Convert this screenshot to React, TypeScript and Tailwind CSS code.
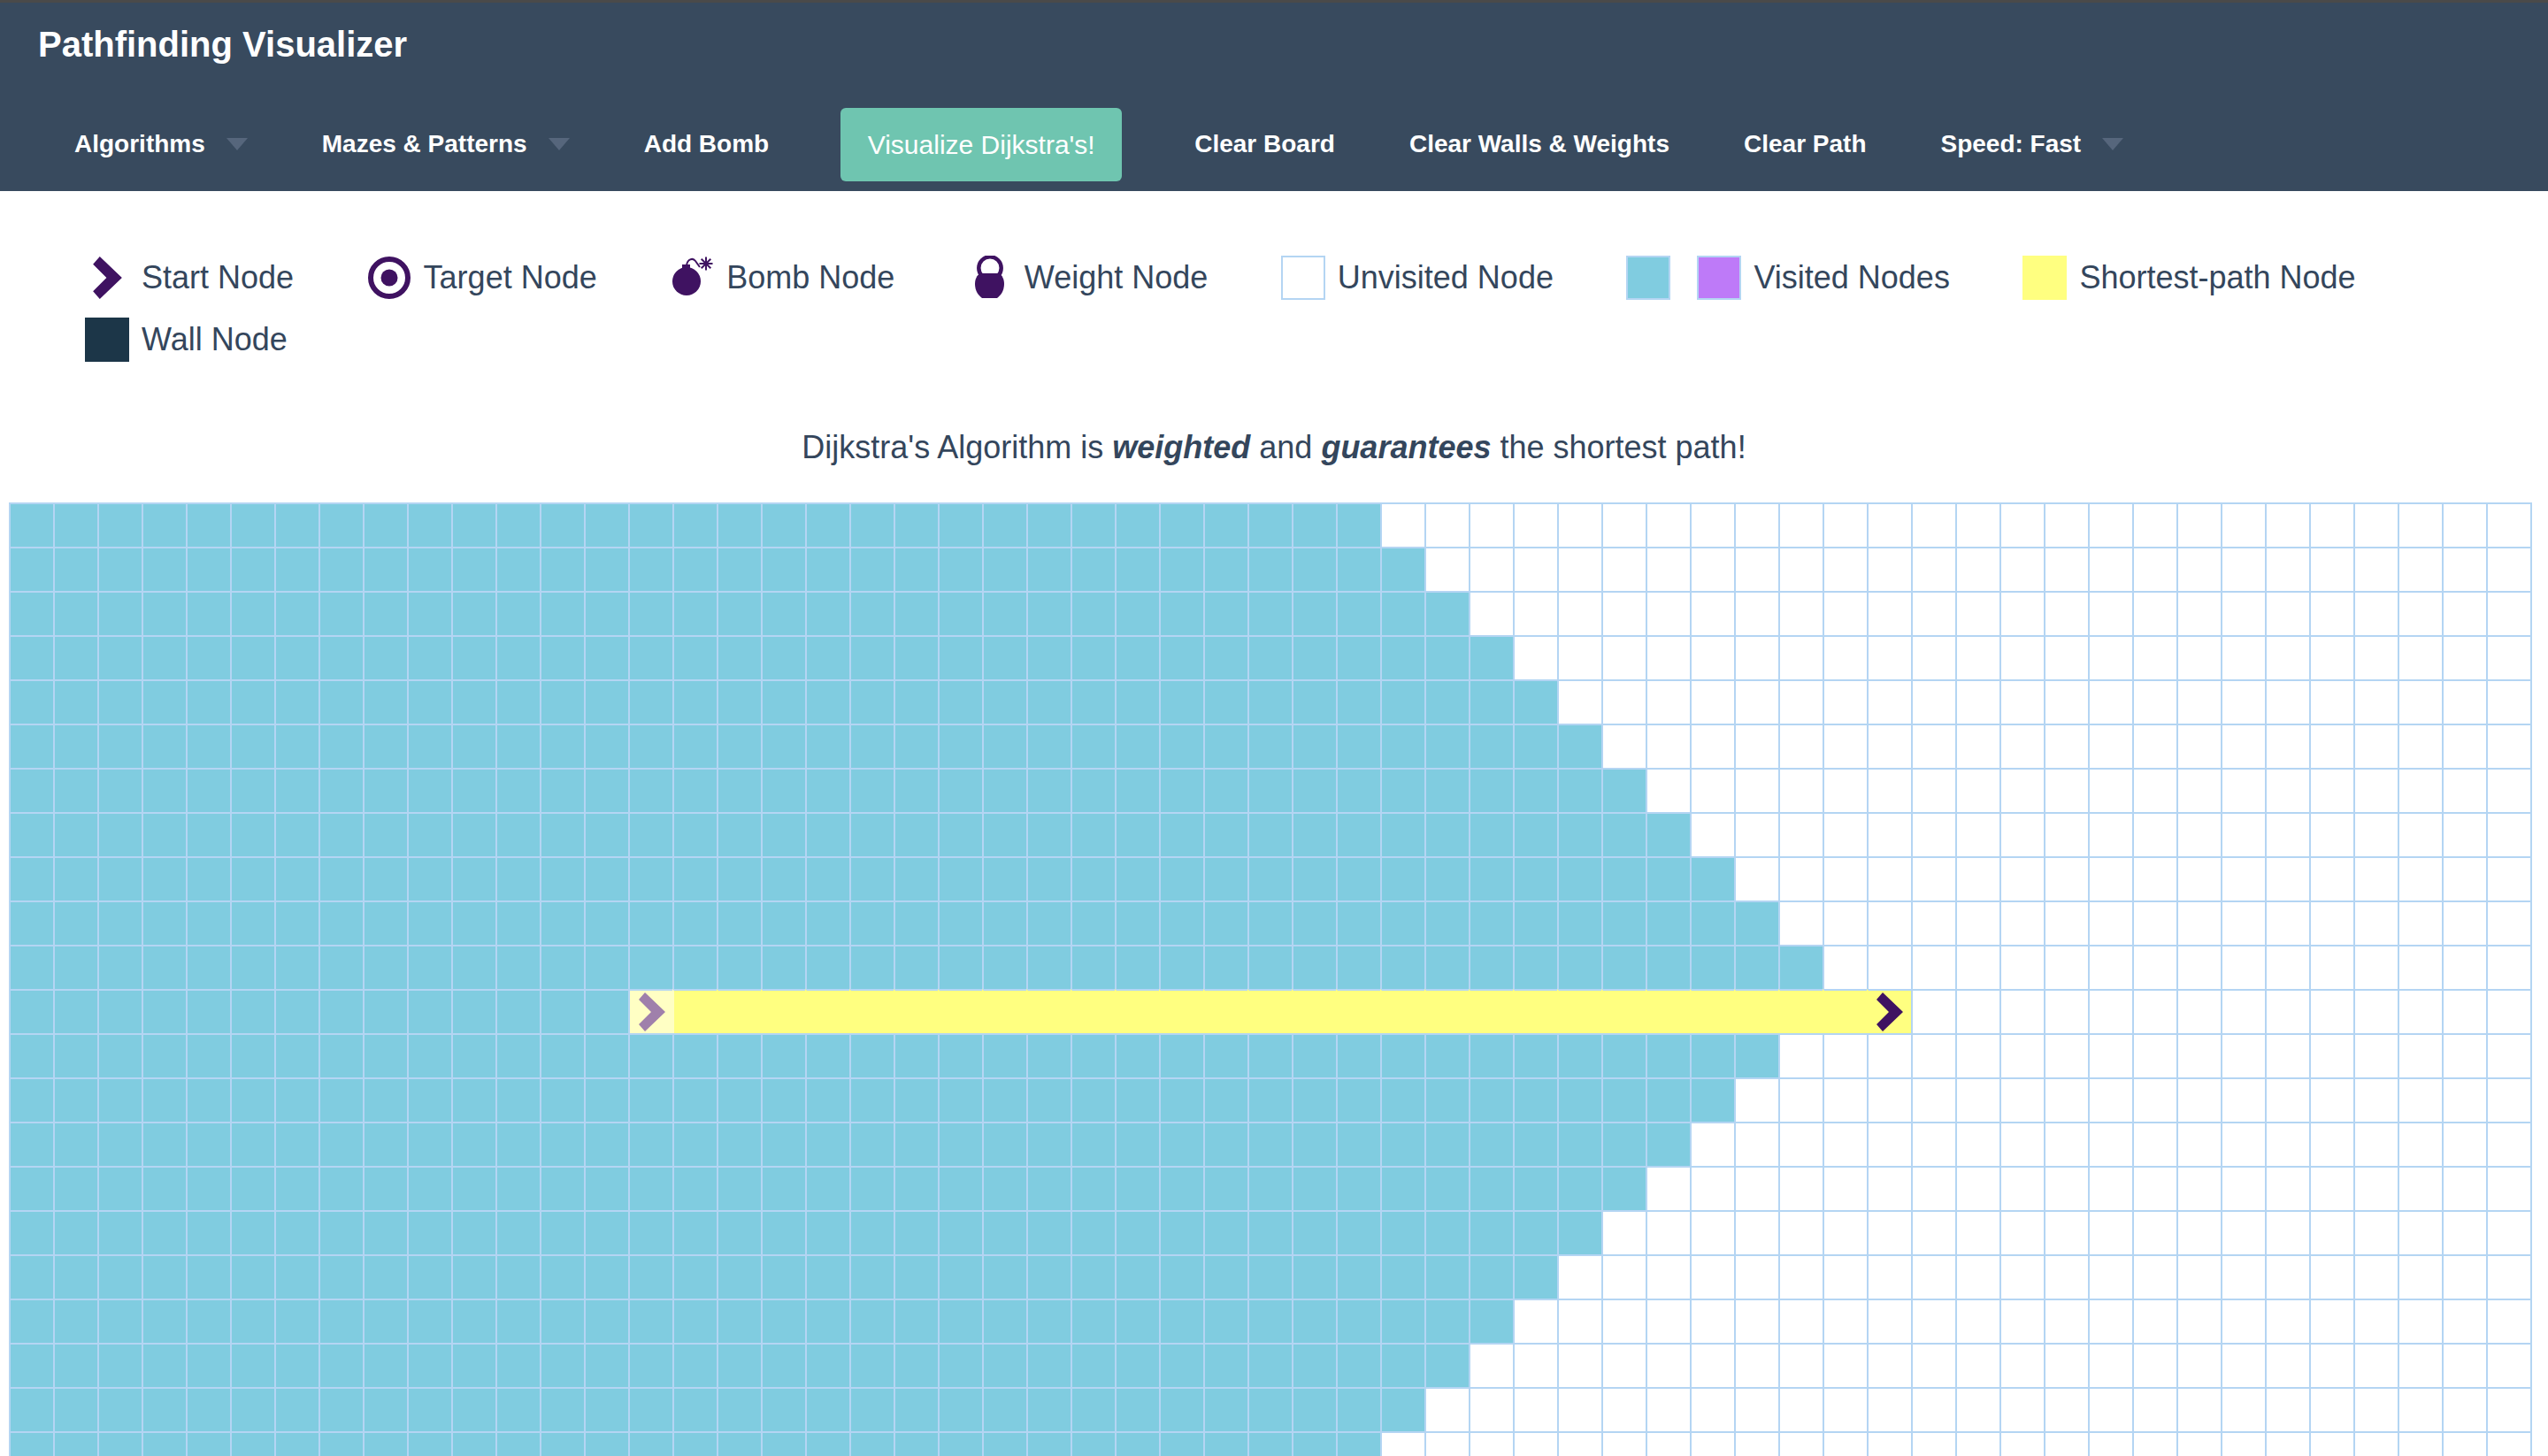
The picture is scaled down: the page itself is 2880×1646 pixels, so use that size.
const visitedCounts = [31, 32, 33, 34, 35, 36, 37, 38, 39, 40, 41, 14, 40, 39, 38, 37, 36, 35, 34, 33, 32, 31];

const StartIcon = ({ className, fill = "#3f1261" }: { className?: string; fill?: string }) => (
  <svg viewBox="0 0 30 44" className={className}>
    <path d="M7 0 L30 22 L7 44 L0 36 L14 22 L0 8 Z" fill={fill} />
  </svg>
);

const TargetIcon = () => (
  <svg viewBox="0 0 50 50" className="h-[50px] w-[50px]">
    <circle cx="25" cy="25" r="21" fill="none" stroke="#3f1261" strokeWidth="6" />
    <circle cx="25" cy="25" r="9.5" fill="#3f1261" />
  </svg>
);

const BombIcon = () => (
  <svg viewBox="0 0 50 50" className="h-[50px] w-[50px]">
    <circle cx="19" cy="29" r="16" fill="#3f1261" />
    <rect x="14" y="10" width="9" height="5" fill="#3f1261" />
    <path d="M19 11 C20 4 26 2 29 6 L34 13" fill="none" stroke="#3f1261" strokeWidth="2" />
    <path d="M41 1.5 V16.5 M33.5 9 H48.5 M35.7 3.7 L46.3 14.3 M46.3 3.7 L35.7 14.3" stroke="#3f1261" strokeWidth="2" />
  </svg>
);

const WeightIcon = () => (
  <svg viewBox="0 0 50 50" className="h-[50px] w-[50px]">
    <circle cx="25" cy="14" r="12.7" fill="none" stroke="#3f1261" strokeWidth="4.5" />
    <path d="M14 20 H35 C39 22 41 27 41 32 C41 40 37 45 33 48 H16 C12 45 8 40 8 32 C8 27 10 22 14 20 Z" fill="#3f1261" />
  </svg>
);

const Swatch = ({ className }: { className: string }) => <div className={`h-[50px] w-[50px] ${className}`} />;

const LegendItem = ({ icon, label }: { icon: React.ReactNode; label: string }) => (
  <li className="mr-[82.5px] flex h-[70px] items-center">
    <div className="mr-[14px] flex w-[50px] justify-center">{icon}</div>
    <span>{label}</span>
  </li>
);

const NavItem = ({ label, caret }: { label: string; caret?: boolean }) => (
  <a className="flex items-center text-[28px] font-bold text-white">
    {label}
    {caret && <span className="ml-[24px] h-0 w-0 border-x-[12px] border-t-[14px] border-x-transparent border-t-[#56667c]" />}
  </a>
);

const Cell = ({ row, col }: { row: number; col: number }) => {
  const isPath = row === 11 && col >= 14 && col <= 42;
  if (isPath) {
    return (
      <div
        className={`flex h-[50px] w-[50px] items-center justify-center border-t-2 border-l-2 border-t-[#b4d5f3] ${
          col === 14 ? "border-l-[#b4d5f3] bg-[#ffffc4]" : col === 15 ? "border-l-[#ffffc4] bg-[#ffff80]" : "border-l-[#ffff80] bg-[#ffff80]"
        }`}
      >
        {col === 14 && <StartIcon className="ml-[2px] h-[44px] w-[30px]" fill="#9f80ab" />}
        {col === 42 && <StartIcon className="h-[44px] w-[30px]" />}
      </div>
    );
  }
  const visited = col < visitedCounts[row];
  return <div className={`h-[50px] w-[50px] border-t-2 border-l-2 border-[#b4d5f3] ${visited ? "bg-[#80cce0]" : "bg-white"}`} />;
};

export default function App() {
  return (
    <div className="h-[1646px] overflow-hidden bg-white font-['Liberation_Sans',Arial,sans-serif] text-[#34465c]">
      <nav className="h-[216px] border-t-[3px] border-[#4a4a4a] bg-[#384a5e]">
        <h1 className="pt-[24px] pl-[43px] text-[40px] leading-[46px] font-bold text-white">Pathfinding Visualizer</h1>
        <div className="mt-[48px] flex h-[84px] items-center pl-[84px]">
          <NavItem label="Algorithms" caret />
          <div className="ml-[84px]"><NavItem label="Mazes & Patterns" caret /></div>
          <div className="ml-[84px]"><NavItem label="Add Bomb" /></div>
          <button className="ml-[81px] h-[83px] w-[318px] rounded-[6px] bg-[#6fc5b0] text-[30px] text-white">Visualize Dijkstra's!</button>
          <div className="ml-[82px]"><NavItem label="Clear Board" /></div>
          <div className="ml-[84px]"><NavItem label="Clear Walls & Weights" /></div>
          <div className="ml-[84px]"><NavItem label="Clear Path" /></div>
          <div className="ml-[84px]"><NavItem label="Speed: Fast" caret /></div>
        </div>
      </nav>

      <ul className="flex flex-wrap pt-[63px] pl-[96px] text-[36px]">
        <LegendItem icon={<StartIcon className="h-[48px] w-[33px]" />} label="Start Node" />
        <LegendItem icon={<TargetIcon />} label="Target Node" />
        <LegendItem icon={<BombIcon />} label="Bomb Node" />
        <LegendItem icon={<WeightIcon />} label="Weight Node" />
        <LegendItem icon={<Swatch className="border-2 border-[#b4d5f3]" />} label="Unvisited Node" />
        <li className="mr-[82.5px] flex h-[70px] items-center">
          <Swatch className="mr-[30px] border-2 border-[#b4d5f3] bg-[#80cce0]" />
          <Swatch className="mr-[14px] border-2 border-[#b4d5f3] bg-[#be7af8]" />
          <span>Visited Nodes</span>
        </li>
        <LegendItem icon={<Swatch className="bg-[#ffff80]" />} label="Shortest-path Node" />
        <LegendItem icon={<Swatch className="bg-[#1c3648]" />} label="Wall Node" />
      </ul>

      <p className="mt-[66px] text-center text-[36px] leading-[42px]">
        Dijkstra's Algorithm is <b><i>weighted</i></b> and <b><i>guarantees</i></b> the shortest path!
      </p>

      <div className="mt-[41px] ml-[10px] grid w-[2852px] grid-cols-[repeat(57,50px)] border-r-2 border-[#b4d5f3]">
        {visitedCounts.map((_, row) =>
          Array.from({ length: 57 }, (_, col) => <Cell key={`${row}-${col}`} row={row} col={col} />)
        )}
      </div>
    </div>
  );
}
